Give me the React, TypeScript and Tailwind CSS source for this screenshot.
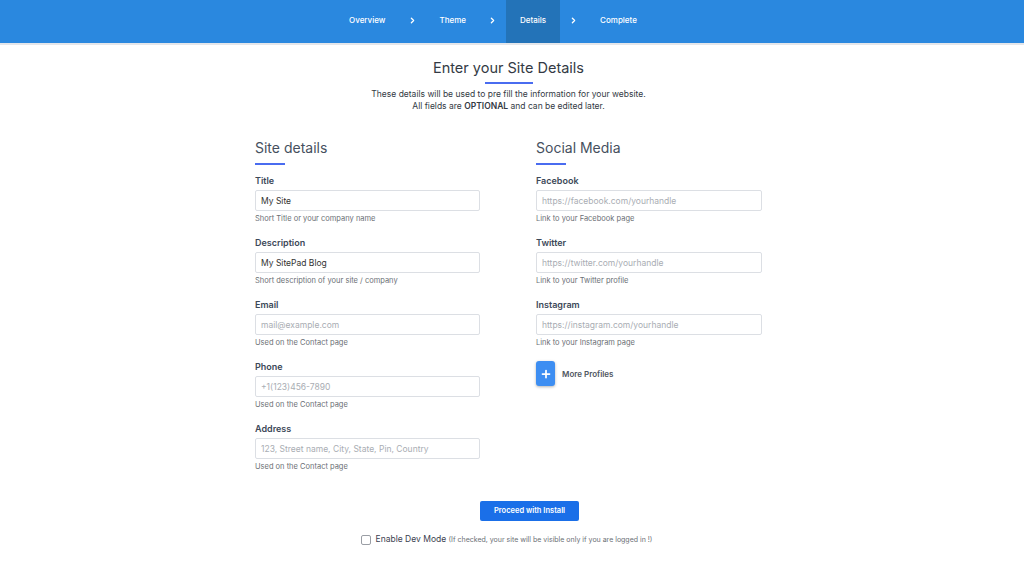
import React from "react";
import { ChevronRight, Plus } from "lucide-react";

const steps = ["Overview", "Theme", "Details", "Complete"];

const siteFields = [
  { label: "Title", value: "My Site", placeholder: "", help: "Short Title or your company name" },
  { label: "Description", value: "My SitePad Blog", placeholder: "", help: "Short description of your site / company" },
  { label: "Email", value: "", placeholder: "mail@example.com", help: "Used on the Contact page" },
  { label: "Phone", value: "", placeholder: "+1(123)456-7890", help: "Used on the Contact page" },
  { label: "Address", value: "", placeholder: "123, Street name, City, State, Pin, Country", help: "Used on the Contact page" },
];

const socialFields = [
  { label: "Facebook", value: "", placeholder: "https://facebook.com/yourhandle", help: "Link to your Facebook page" },
  { label: "Twitter", value: "", placeholder: "https://twitter.com/yourhandle", help: "Link to your Twitter profile" },
  { label: "Instagram", value: "", placeholder: "https://instagram.com/yourhandle", help: "Link to your Instagram page" },
];

type Field = { label: string; value: string; placeholder: string; help: string };

const FieldRow = ({ field }: { field: Field }) => (
  <div className="mb-[13px]">
    <div className="text-[9px] leading-[12px] font-semibold text-[#3c4858]">{field.label}</div>
    <input
      defaultValue={field.value}
      placeholder={field.placeholder}
      className="mt-[3px] block w-full h-[21px] px-[5px] border border-[#dcdfe4] rounded-[2px] text-[8.5px] text-[#333] placeholder:text-[#a9adb3] outline-none bg-white"
    />
    <div className="mt-[3px] text-[7.5px] leading-[10px] text-[#6b6f75]">{field.help}</div>
  </div>
);

const SectionHeading = ({ title }: { title: string }) => (
  <div className="mb-[10px]">
    <h2 className="text-[14px] leading-[20px] text-[#46505e]">{title}</h2>
    <div className="mt-[5px] w-[30px] h-[2px] bg-[#4a6cf0]" />
  </div>
);

export default function App() {
  return (
    <div className="min-h-[576px] bg-white" style={{ fontFamily: "Inter, 'Open Sans', sans-serif" }}>
      {/* Wizard steps */}
      <header className="h-[43px] bg-[#2a88df] flex justify-center pr-[38px] border-b-2 border-[#e4e6ea] box-content">
        {steps.map((step, i) => (
          <React.Fragment key={step}>
            <div
              className={`h-full px-[14px] flex items-center pb-[3px] text-[8px] font-medium text-white ${
                step === "Details" ? "bg-[#2373b8]" : ""
              }`}
            >
              {step}
            </div>
            {i < steps.length - 1 && (
              <div className="w-[26px] flex items-center justify-center pb-[3px] text-white">
                <ChevronRight size={9} strokeWidth={3.5} />
              </div>
            )}
          </React.Fragment>
        ))}
      </header>

      <main className="pr-[7px]">
        <div className="pt-[12px] flex flex-col items-center">
          <h1 className="text-[14.5px] leading-[22px] text-[#333a44]">Enter your Site Details</h1>
          <div className="mt-[3px] w-[48px] h-[2px] bg-[#4a6cf0]" />
          <p className="mt-[4px] text-[8.5px] leading-[12px] text-[#333a44] text-center">
            These details will be used to pre fill the information for your website.
            <br />
            All fields are <span className="font-semibold">OPTIONAL</span> and can be edited later.
          </p>
        </div>

        <div className="mt-[26px] flex justify-center gap-[56px]">
          <section className="w-[225px]">
            <SectionHeading title="Site details" />
            {siteFields.map((f) => (
              <FieldRow key={f.label} field={f} />
            ))}
          </section>

          <section className="w-[226px]">
            <SectionHeading title="Social Media" />
            {socialFields.map((f) => (
              <FieldRow key={f.label} field={f} />
            ))}
            <div className="mt-[4px] flex items-center gap-[7px]">
              <button className="w-[19px] h-[25px] rounded-[3px] bg-[#3d8ef2] flex items-center justify-center text-white shadow-[0_1px_3px_rgba(0,0,0,0.3)]">
                <Plus size={12} strokeWidth={3.5} />
              </button>
              <span className="text-[8px] font-semibold text-[#4f5661]">More Profiles</span>
            </div>
          </section>
        </div>

        <div className="mt-[16px] flex flex-col items-center">
          <button className="ml-[42px] w-[99px] h-[20px] rounded-[2px] bg-[#1a6fe8] text-white text-[7.5px] font-semibold">
            Proceed with Install
          </button>
          <label className="mt-[12px] -ml-[4px] flex items-center gap-[5px] text-[8.5px] leading-[12px] text-[#3c4250]">
            <span className="w-[10px] h-[10px] border border-[#9a9ea5] rounded-[2px] bg-white" />
            <span>
              Enable Dev Mode{" "}
              <span className="text-[7px] text-[#6b6f75]">(If checked, your site will be visible only if you are logged in !)</span>
            </span>
          </label>
        </div>
      </main>
    </div>
  );
}
